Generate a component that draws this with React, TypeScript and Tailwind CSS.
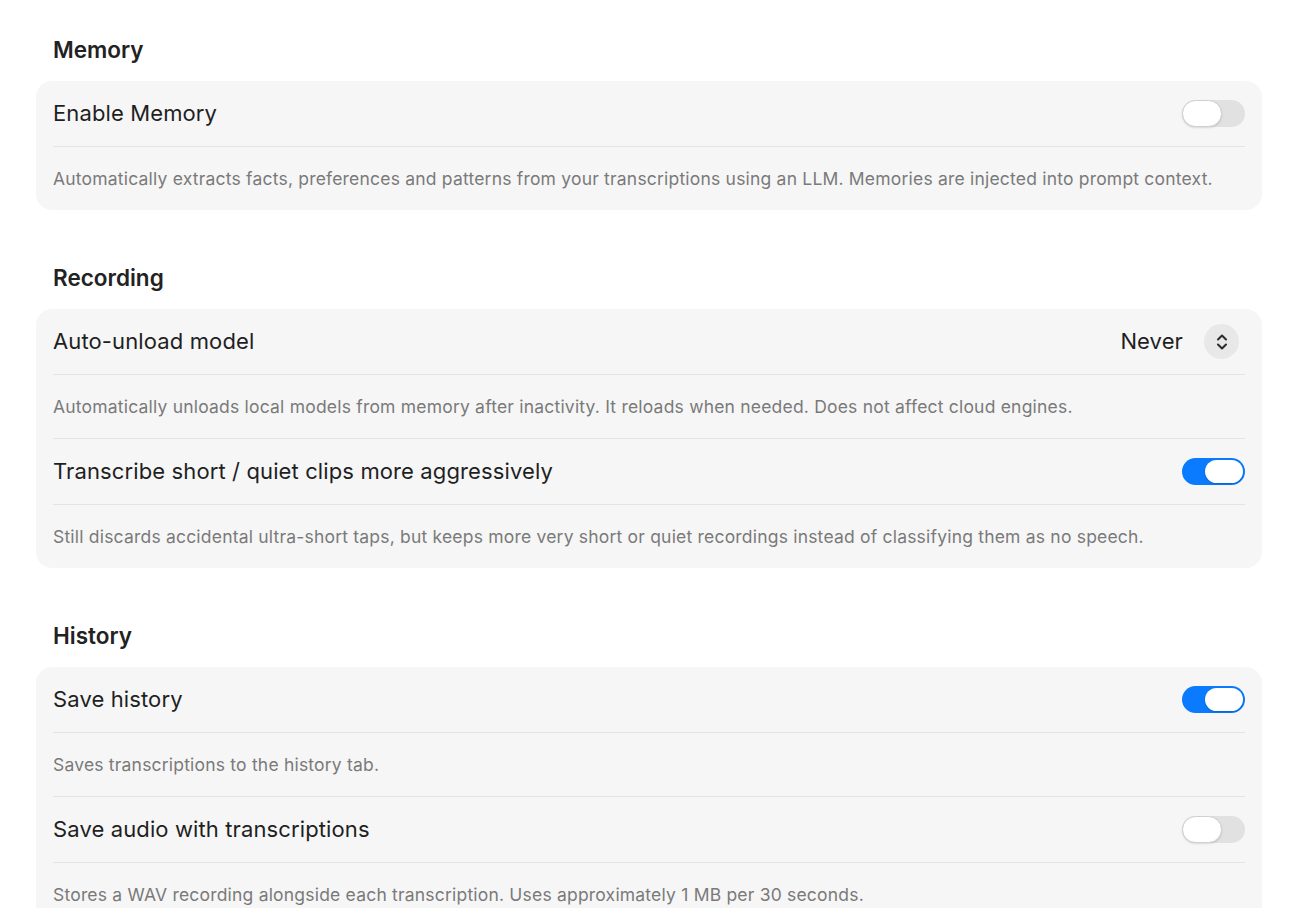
import React from "react";

type Row =
  | { kind: "toggle"; label: string; on: boolean }
  | { kind: "select"; label: string; value: string }
  | { kind: "desc"; text: string };

interface Section {
  title: string;
  rows: Row[];
}

const sections: Section[] = [
  {
    title: "Memory",
    rows: [
      { kind: "toggle", label: "Enable Memory", on: false },
      {
        kind: "desc",
        text: "Automatically extracts facts, preferences and patterns from your transcriptions using an LLM. Memories are injected into prompt context.",
      },
    ],
  },
  {
    title: "Recording",
    rows: [
      { kind: "select", label: "Auto-unload model", value: "Never" },
      {
        kind: "desc",
        text: "Automatically unloads local models from memory after inactivity. It reloads when needed. Does not affect cloud engines.",
      },
      { kind: "toggle", label: "Transcribe short / quiet clips more aggressively", on: true },
      {
        kind: "desc",
        text: "Still discards accidental ultra-short taps, but keeps more very short or quiet recordings instead of classifying them as no speech.",
      },
    ],
  },
  {
    title: "History",
    rows: [
      { kind: "toggle", label: "Save history", on: true },
      { kind: "desc", text: "Saves transcriptions to the history tab." },
      { kind: "toggle", label: "Save audio with transcriptions", on: false },
      {
        kind: "desc",
        text: "Stores a WAV recording alongside each transcription. Uses approximately 1 MB per 30 seconds.",
      },
    ],
  },
];

function Toggle({ on }: { on: boolean }) {
  if (on) {
    return (
      <div className="flex h-[27px] w-[63px] items-center justify-end rounded-full bg-[#0a7aff] px-[2px]">
        <div className="h-[23px] w-[38px] rounded-full bg-white shadow-[0_1px_2px_rgba(0,0,0,0.2)]" />
      </div>
    );
  }
  return (
    <div className="flex h-[27px] w-[63px] items-center justify-start rounded-full bg-[#e1e1e1]">
      <div className="h-[27px] w-[40px] rounded-full border border-[#d0d0d0] bg-white shadow-[0_1px_2px_rgba(0,0,0,0.12)]" />
    </div>
  );
}

function Stepper() {
  return (
    <div className="flex h-[35px] w-[35px] items-center justify-center rounded-full bg-[#e8e8e8]">
      <svg width="12" height="18" viewBox="0 0 12 18" fill="none" stroke="#2b2b2b" strokeWidth="2" strokeLinecap="round" strokeLinejoin="round">
        <path d="M2 6.5 6 2.5l4 4" />
        <path d="M2 11.5l4 4 4-4" />
      </svg>
    </div>
  );
}

function SettingRow({ row }: { row: Row }) {
  if (row.kind === "desc") {
    return (
      <div className="flex h-[63px] items-center text-[17.5px] leading-6 tracking-[0.2px] text-[#7a7a7a]">
        {row.text}
      </div>
    );
  }
  return (
    <div className="flex h-[65px] items-center justify-between text-[22px] tracking-[0.12px] text-[#1f1f1f]">
      <span>{row.label}</span>
      {row.kind === "toggle" ? (
        <Toggle on={row.on} />
      ) : (
        <div className="flex items-center gap-[21px] pr-[6px]">
          <span>{row.value}</span>
          <Stepper />
        </div>
      )}
    </div>
  );
}

export default function App() {
  return (
    <div
      className="min-h-screen bg-white px-9 pt-9 pb-12"
      style={{ fontFamily: "Inter, 'Noto Sans', sans-serif" }}
    >
      <div className="flex flex-col gap-[54px]">
        {sections.map((section) => (
          <section key={section.title}>
            <h2 className="mb-[17px] px-[17px] text-[22.5px] font-semibold leading-7 text-[#222]">
              {section.title}
            </h2>
            <div className="rounded-[16px] bg-[#f6f6f6] px-[17px]">
              {section.rows.map((row, i) => (
                <div key={i} className={i > 0 ? "border-t border-[#e4e4e4]" : ""}>
                  <SettingRow row={row} />
                </div>
              ))}
            </div>
          </section>
        ))}
      </div>
    </div>
  );
}
